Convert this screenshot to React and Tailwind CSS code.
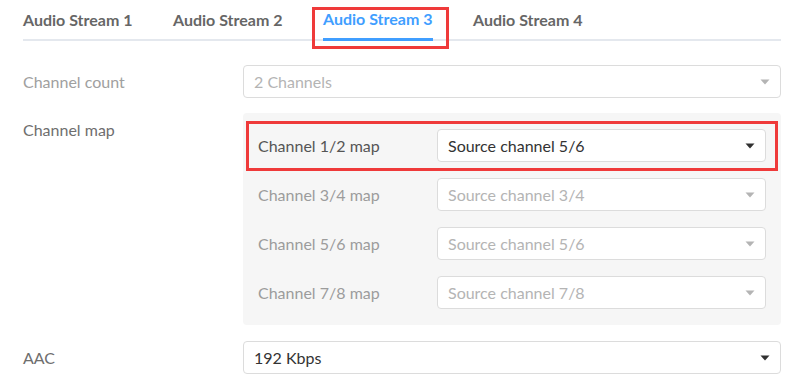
import React from 'react';

const tabs = ['Audio Stream 1', 'Audio Stream 2', 'Audio Stream 3', 'Audio Stream 4'];

const maps = [
  { label: 'Channel 1/2 map', value: 'Source channel 5/6', active: true },
  { label: 'Channel 3/4 map', value: 'Source channel 3/4' },
  { label: 'Channel 5/6 map', value: 'Source channel 5/6' },
  { label: 'Channel 7/8 map', value: 'Source channel 7/8' },
];

function Caret({ disabled }) {
  return (
    <svg width="10" height="6" viewBox="0 0 10 6" className="shrink-0">
      <path d="M0.5 0.5 L9.5 0.5 L5 5.5 Z" fill={disabled ? '#b4b4b4' : '#303030'} />
    </svg>
  );
}

function Select({ value, disabled, className = '' }) {
  return (
    <div
      className={`flex h-[33px] items-center justify-between rounded-[4px] border border-[#dcdcdc] bg-white pl-[10px] pr-[10px] text-[16px] ${
        disabled ? 'text-[#b4b4b4]' : 'text-[#333]'
      } ${className}`}
    >
      <span>{value}</span>
      <Caret disabled={disabled} />
    </div>
  );
}

export default function App() {
  return (
    <div className="h-[383px] w-[792px] bg-white pl-[23px] pr-[11px] font-['Lato','Open_Sans',sans-serif]">
      {/* tab bar */}
      <div className="flex h-[41px] gap-[40px] border-b-2 border-[#e4e8ee]">
        {tabs.map((t, i) => (
          <div
            key={t}
            className={`relative -mb-[2px] flex h-[41px] w-[110px] items-center whitespace-nowrap pb-[1px] text-[16px] font-bold ${
              i === 2 ? 'border-b-[3px] border-[#409eff] pb-0 text-[#409eff]' : 'text-[#666]'
            }`}
          >
            {t}
            {i === 2 && (
              <div className="absolute -left-[11px] -right-[16px] top-[7px] bottom-[-11px] border-[3px] border-[#ef3a3a]" />
            )}
          </div>
        ))}
      </div>

      <div className="mt-[24px] flex flex-col gap-[15px]">
        <div className="flex items-center">
          <div className="w-[220px] text-[16px] text-[#a0a0a0]">Channel count</div>
          <Select value="2 Channels" disabled className="flex-1" />
        </div>

        <div className="flex">
          <div className="w-[220px] pt-[7px] text-[16px] leading-[20px] text-[#6e6e6e]">Channel map</div>
          <div className="flex flex-1 flex-col gap-[16px] rounded-[4px] bg-[#f6f6f6] px-[15px] pt-[16px] pb-[16px]">
            {maps.map((m) => (
              <div key={m.label} className="relative flex items-center">
                <div className={`w-[179px] text-[16px] ${m.active ? 'text-[#555]' : 'text-[#9c9c9c]'}`}>
                  {m.label}
                </div>
                <Select value={m.value} disabled={!m.active} className="flex-1" />
                {m.active && (
                  <div className="absolute -left-[12px] -right-[12px] -top-[8px] -bottom-[9px] border-[3px] border-[#ef3a3a]" />
                )}
              </div>
            ))}
          </div>
        </div>

        <div className="mt-[1px] flex items-center">
          <div className="w-[220px] text-[16px] text-[#6e6e6e]">AAC</div>
          <Select value="192 Kbps" className="flex-1" />
        </div>
      </div>
    </div>
  );
}
